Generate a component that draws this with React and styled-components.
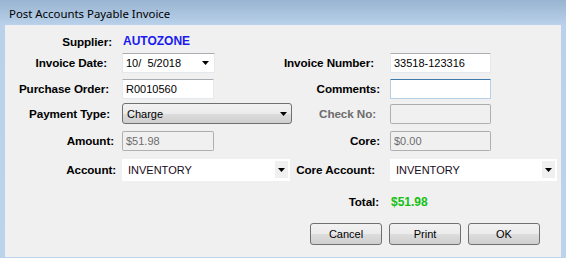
import styled, { createGlobalStyle } from "styled-components";

const Global = createGlobalStyle`
  html, body { margin: 0; padding: 0; }
  body { width: 566px; height: 258px; overflow: hidden; }
`;

// dialog frame, Win7 basic look
const Window = styled.div`
  width: 566px;
  height: 258px;
  box-sizing: border-box;
  display: flex;
  flex-direction: column;
  background: linear-gradient(#99b4d1 0px, #b9d1ea 25px, #bcd3ec 100%);
`;

const TitleBar = styled.div`
  height: 25px;
  display: flex;
  align-items: center;
  padding: 1px 0 0 9px;
  box-sizing: border-box;
  font: 11.4px "Noto Sans", "Open Sans", sans-serif;
  color: #000;
`;

const Client = styled.div`
  flex: 1;
  margin: 0 5px 1px 5px;
  background: #f0f0f0;
  display: flex;
  flex-direction: column;
`;

const Form = styled.div`
  display: grid;
  grid-template-columns: 117px 170px 98px 171px;
  grid-template-rows: 20px 23px 29px 21px 33px 25px 39px;
  align-items: center;
  padding-top: 6px;
  font: 11px "Liberation Sans", Arial, sans-serif;
`;

const Label = styled.div`
  justify-self: end;
  padding-right: ${(p) => p.$pr || 0}px;
  grid-column: ${(p) => p.$col || "auto"};
  font: bold 11.7px "Liberation Sans", Arial, sans-serif;
  letter-spacing: -0.1px;
  color: ${(p) => (p.$muted ? "#6d6d6d" : "#000")};
  white-space: nowrap;
`;

const Value = styled.div`
  grid-column: ${(p) => p.$col || "auto"};
  padding-left: 1px;
  font: bold 12px "Liberation Sans", Arial, sans-serif;
  color: ${(p) => p.$color};
`;

const TextBox = styled.div`
  width: ${(p) => p.$w}px;
  height: 20px;
  box-sizing: border-box;
  display: flex;
  align-items: center;
  padding-left: 3px;
  white-space: pre;
  background: ${(p) => (p.$disabled ? "#f0f0f0" : "#fff")};
  color: ${(p) => (p.$disabled ? "#6d6d6d" : "#000")};
  border: 1px solid ${(p) => (p.$focus ? "#b5cfe7" : p.$disabled ? "#b0b0b0" : "#e3e9ef")};
  border-top-color: ${(p) => (p.$focus ? "#3d7bad" : p.$disabled ? "#adadad" : "#abadb3")};
  border-radius: ${(p) => (p.$disabled ? 2 : 1)}px;
`;

const DateBox = styled(TextBox)`
  justify-content: space-between;
  padding-right: 5px;
`;

const DropCombo = styled.div`
  width: 170px;
  height: 21px;
  box-sizing: border-box;
  display: flex;
  align-items: center;
  justify-content: space-between;
  padding: 0 4px 0 4px;
  border: 1px solid #707070;
  border-radius: 3px;
  background: linear-gradient(#f2f2f2 0%, #ebebeb 50%, #dddddd 50%, #cfcfcf 100%);
`;

const FlatCombo = styled.div`
  width: ${(p) => p.$w}px;
  height: 22px;
  box-sizing: border-box;
  display: flex;
  align-items: center;
  justify-content: space-between;
  padding: 0 2px 0 6px;
  background: #fff;
  color: #1a0a1a;
`;

const ArrowButton = styled.div`
  width: 13px;
  height: 17px;
  display: flex;
  align-items: center;
  justify-content: center;
  background: #f0f0f0;
`;

const ButtonBar = styled.div`
  display: flex;
  justify-content: flex-end;
  gap: 7px;
  padding: 2px 21px 0 0;
`;

const Button = styled.button`
  width: 72px;
  height: 22px;
  margin: 0;
  padding: 0;
  border: 1px solid #707070;
  border-radius: 3px;
  background: linear-gradient(#f2f2f2 0%, #ebebeb 50%, #dddddd 50%, #cfcfcf 100%);
  font: 11px "Liberation Sans", Arial, sans-serif;
  color: #000;
`;

const Arrow = () => (
  <svg width="7" height="4" viewBox="0 0 7 4">
    <path d="M0 0h7L3.5 4z" fill="#000" />
  </svg>
);

export default function App() {
  return (
    <>
      <Global />
      <Window>
        <TitleBar>Post Accounts Payable Invoice</TitleBar>
        <Client>
          <Form>
            <Label $pr={10}>Supplier:</Label>
            <Value $col="2 / span 3" $color="#1a1af0">AUTOZONE</Value>

            <Label $pr={15}>Invoice Date:</Label>
            <DateBox $w={93}>
              <span>10/  5/2018</span>
              <Arrow />
            </DateBox>
            <Label $pr={16}>Invoice Number:</Label>
            <TextBox $w={101}>33518-123316</TextBox>

            <Label $pr={13}>Purchase Order:</Label>
            <TextBox $w={92}>R0010560</TextBox>
            <Label $pr={10}>Comments:</Label>
            <TextBox $w={101} $focus />

            <Label $pr={12}>Payment Type:</Label>
            <DropCombo>
              <span>Charge</span>
              <Arrow />
            </DropCombo>
            <Label $pr={14} $muted>Check No:</Label>
            <TextBox $w={101} $disabled />

            <Label $pr={8}>Amount:</Label>
            <TextBox $w={92} $disabled>$51.98</TextBox>
            <Label $pr={10}>Core:</Label>
            <TextBox $w={101} $disabled>$0.00</TextBox>

            <Label $pr={6}>Account:</Label>
            <FlatCombo $w={168}>
              <span>INVENTORY</span>
              <ArrowButton><Arrow /></ArrowButton>
            </FlatCombo>
            <Label $pr={15}>Core Account:</Label>
            <FlatCombo $w={167}>
              <span>INVENTORY</span>
              <ArrowButton><Arrow /></ArrowButton>
            </FlatCombo>

            <Label $col={3} $pr={11}>Total:</Label>
            <Value $color="#14c014">$51.98</Value>
          </Form>
          <ButtonBar>
            <Button>Cancel</Button>
            <Button>Print</Button>
            <Button>OK</Button>
          </ButtonBar>
        </Client>
      </Window>
    </>
  );
}
